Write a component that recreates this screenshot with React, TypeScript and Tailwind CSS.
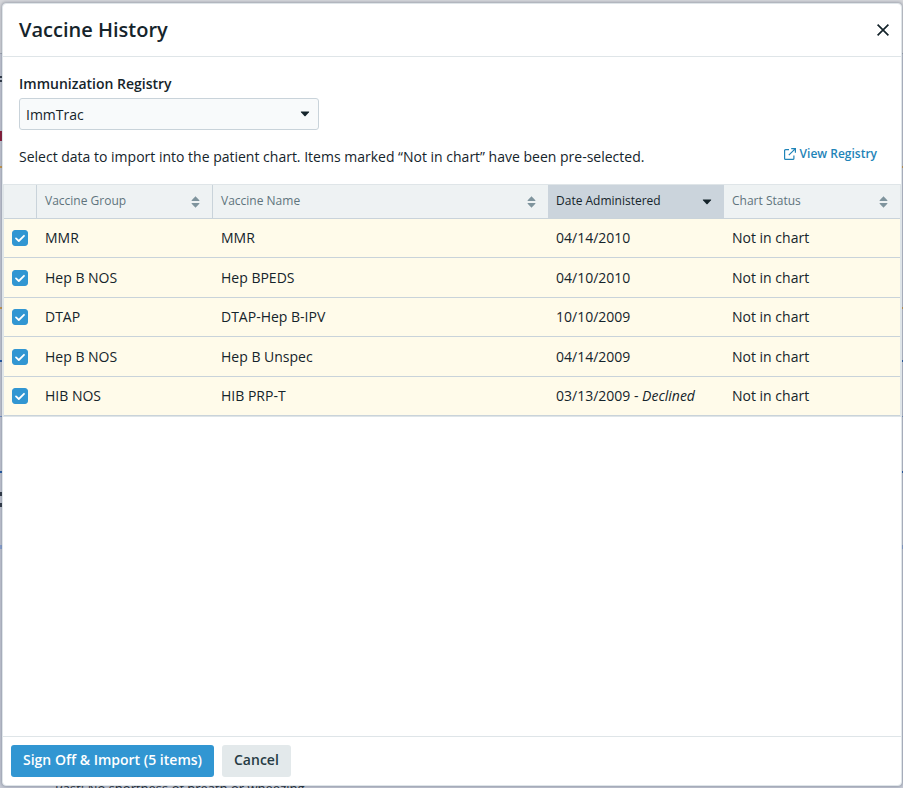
import { useState } from "react";

type Row = { group: string; name: string; date: string; note?: string };

const rows: Row[] = [
  { group: "MMR", name: "MMR", date: "04/14/2010" },
  { group: "Hep B NOS", name: "Hep BPEDS", date: "04/10/2010" },
  { group: "DTAP", name: "DTAP-Hep B-IPV", date: "10/10/2009" },
  { group: "Hep B NOS", name: "Hep B Unspec", date: "04/14/2009" },
  { group: "HIB NOS", name: "HIB PRP-T", date: "03/13/2009", note: "Declined" },
];

function SortIcon() {
  return (
    <svg width="9" height="12" viewBox="0 0 9 12" className="shrink-0 fill-[#7f949d]" aria-hidden="true">
      <path d="M4.5 0.3 8.3 4.2Q8.8 5 8 5H1Q0.2 5 0.7 4.2Z" />
      <path d="M4.5 11.7 8.3 7.8Q8.8 7 8 7H1Q0.2 7 0.7 7.8Z" />
    </svg>
  );
}

function Caret() {
  return (
    <svg width="10" height="6" viewBox="0 0 10 6" className="shrink-0 fill-[#15242b]" aria-hidden="true">
      <path d="M1.2 0.5H8.8Q9.6 0.5 9 1.2L5.6 5Q5 5.6 4.4 5L1 1.2Q0.4 0.5 1.2 0.5Z" />
    </svg>
  );
}

/* The dimmed chart page that lies behind the dialog. */
function ChartPage() {
  return (
    <div className="flex h-screen flex-col overflow-hidden bg-[#c6cad5]" aria-hidden="true">
      <div className="h-[54px] shrink-0 border-b border-[#a3a9b5] bg-[#d6d7db]" />
      <div className="flex h-[114px] shrink-0 flex-col border-b-2 border-[#cf9a48] pt-[22px]">
        <div className="h-[6px] w-[2px] border-y-2 border-[#2b3440]" />
        <div className="mt-[49px] h-[10px] w-[2px] bg-[#8c1230]" />
      </div>
      <div className="h-[141px] shrink-0 border-b-2 border-[#cf9a48]" />
      <div className="h-[53px] shrink-0 border-b-2 border-[#1b55a5]" />
      <div className="h-[55px] shrink-0 border-b border-[#6f8fc6]" />
      <div className="h-[56px] shrink-0 border-b-2 border-[#1b55a5]" />
      <div className="h-[76px] shrink-0 border-b-4 border-[#8ba5d6] pt-[19px]">
        <div className="h-[15px] w-[2px] border-y-4 border-[#2b3440]" />
      </div>
      <div className="grow" />
      <p className="h-[10px] shrink-0 pl-[55px] text-[13px] leading-[20px] text-[#15242b]">
        Past: No shortness of breath or wheezing
      </p>
    </div>
  );
}

export default function App() {
  const [checked, setChecked] = useState<boolean[]>(rows.map(() => true));
  const count = checked.filter(Boolean).length;
  const th = "h-[34px] border-b border-[#c9d3da] px-2 text-left font-normal";

  return (
    <div className="relative font-['Open_Sans','Noto_Sans',sans-serif] text-[14px] leading-[20px] text-[#15242b]">
      <ChartPage />
      <div
        role="dialog"
        aria-labelledby="dialog-title"
        className="absolute top-[3px] right-px bottom-[2px] left-[2px] flex flex-col overflow-hidden rounded-[4px] border border-[#dfe5e9] bg-white shadow-[0_0_3px_1px_rgba(80,90,110,0.4)]"
      >
        <header className="flex h-[53px] shrink-0 items-center justify-between border-b border-[#dfe5e8] pr-3 pl-4">
          <h1 id="dialog-title" className="text-[20px] leading-[28px] font-semibold">
            Vaccine History
          </h1>
          <button type="button" aria-label="Close" className="flex h-5 w-3 items-center justify-center">
            <svg width="12" height="12" viewBox="0 0 12 12" className="stroke-[#15242b]" fill="none" strokeWidth="1.7">
              <path d="M0.6 0.6 11.4 11.4M11.4 0.6 0.6 11.4" />
            </svg>
          </button>
        </header>

        <main className="flex min-h-0 grow flex-col overflow-auto">
          <div className="px-4 pt-[17px]">
            <label htmlFor="registry" className="block font-semibold">
              Immunization Registry
            </label>
            <div className="relative mt-1 w-[300px]">
              <select
                id="registry"
                className="block h-8 w-full appearance-none rounded-[3px] border border-[#c9d3da] bg-[#f8fafb] pt-[2px] pr-8 pl-[6px]"
              >
                <option>ImmTrac</option>
              </select>
              <span className="pointer-events-none absolute inset-y-0 right-[9px] flex items-center">
                <Caret />
              </span>
            </div>
          </div>
          <div className="flex items-start justify-between pt-[14px] pr-6 pb-[17px] pl-4">
            <p className="pt-[3px]">
              Select data to import into the patient chart. Items marked “Not in chart” have been pre-selected.
            </p>
            <a href="#registry" className="flex items-center gap-1 text-[12px] font-semibold text-[#1f84b8]">
              <svg width="12" height="12" viewBox="0 0 12 12" fill="none" stroke="currentColor" strokeWidth="1.2" aria-hidden="true">
                <path d="M5 1.6H1.6Q0.6 1.6 0.6 2.6V10.4Q0.6 11.4 1.6 11.4H8.9Q9.9 11.4 9.9 10.4V7.4M7.2 0.6H11.4V4.8M11.4 0.6 4.8 7.2" />
              </svg>
              View Registry
            </a>
          </div>

          <table className="w-full table-fixed border-separate border-spacing-0 border border-[#dfe5e8]">
            <colgroup>
              <col className="w-[33px]" />
              <col className="w-[176px]" />
              <col />
              <col className="w-[176px]" />
              <col className="w-[176px]" />
            </colgroup>
            <thead className="bg-[#eef2f3] text-[12px] leading-[18px] text-[#5f747d]">
              <tr>
                <th className={th + " border-r"} aria-label="Selected" />
                <th className={th + " border-r"}>
                  <div className="flex items-center justify-between pr-1">
                    <span className="pb-[2px]">Vaccine Group</span>
                    <SortIcon />
                  </div>
                </th>
                <th className={th}>
                  <div className="flex items-center justify-between pr-1">
                    <span className="pb-[2px]">Vaccine Name</span>
                    <SortIcon />
                  </div>
                </th>
                <th className={th + " bg-[#cbd4dc] text-[#15242b]"} aria-sort="descending">
                  <div className="flex items-center justify-between pr-1">
                    <span className="pb-[2px]">Date Administered</span>
                    <Caret />
                  </div>
                </th>
                <th className={th}>
                  <div className="flex items-center justify-between pr-1">
                    <span className="pb-[2px]">Chart Status</span>
                    <SortIcon />
                  </div>
                </th>
              </tr>
            </thead>
            <tbody className="bg-[#fffbea] [&_td]:border-b [&_td]:border-[#c9d3da] [&_td]:px-2">
              {rows.map((r, i) => (
                <tr key={i} className="h-[39px] even:h-[40px]">
                  <td>
                    <label className="relative block size-4">
                      <input
                        type="checkbox"
                        aria-label={"Import " + r.name}
                        checked={checked[i]}
                        onChange={() => setChecked(checked.map((c, j) => (j === i ? !c : c)))}
                        className="block size-4 appearance-none rounded-[3px] border border-[#9fb0b9] bg-white checked:border-[#3196d2] checked:bg-[#3196d2]"
                      />
                      <svg
                        viewBox="0 0 16 16"
                        fill="none"
                        className="pointer-events-none absolute inset-0 size-4 stroke-white"
                        strokeWidth="1.8"
                        strokeLinecap="round"
                        strokeLinejoin="round"
                        aria-hidden="true"
                      >
                        <path d="M4 8.4 6.8 11 12 5.8" />
                      </svg>
                    </label>
                  </td>
                  <td>{r.group}</td>
                  <td>{r.name}</td>
                  <td>
                    {r.date}
                    {r.note && (
                      <>
                        {" - "}
                        <em>{r.note}</em>
                      </>
                    )}
                  </td>
                  <td>Not in chart</td>
                </tr>
              ))}
            </tbody>
          </table>
        </main>

        <footer className="flex shrink-0 gap-2 border-t border-[#dfe5e8] p-2">
          <button type="button" className="h-8 rounded-[3px] bg-[#3196d2] px-3 pb-[2px] font-semibold text-white">
            Sign Off &amp; Import ({count} items)
          </button>
          <button type="button" className="h-8 rounded-[3px] bg-[#e3e9eb] px-3 pb-[2px] font-semibold text-[#263b44]">
            Cancel
          </button>
        </footer>
      </div>
    </div>
  );
}
